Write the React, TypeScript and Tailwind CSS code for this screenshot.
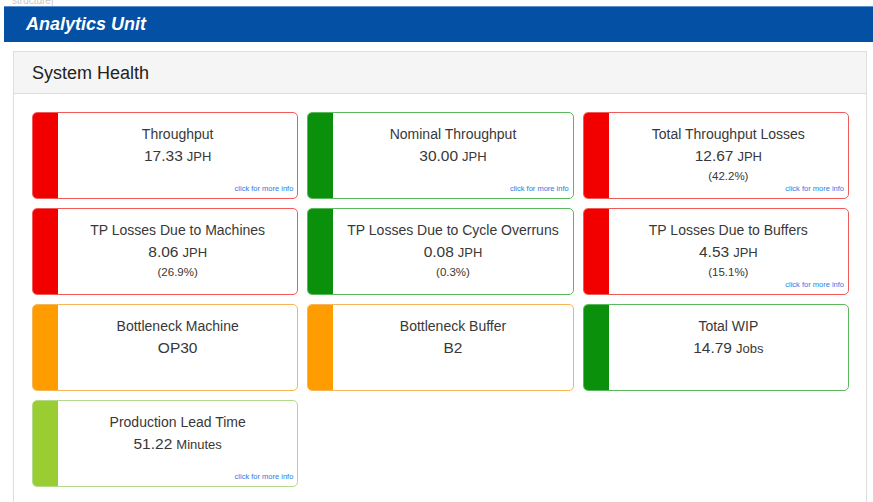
import React from "react";

type Metric = {
  title: string;
  value: string;
  unit?: string;
  pct?: string;
  status: "bad" | "good" | "warn" | "ok";
  more?: boolean;
};

const metrics: Metric[] = [
  { title: "Throughput", value: "17.33", unit: "JPH", status: "bad", more: true },
  { title: "Nominal Throughput", value: "30.00", unit: "JPH", status: "good", more: true },
  { title: "Total Throughput Losses", value: "12.67", unit: "JPH", pct: "(42.2%)", status: "bad", more: true },
  { title: "TP Losses Due to Machines", value: "8.06", unit: "JPH", pct: "(26.9%)", status: "bad" },
  { title: "TP Losses Due to Cycle Overruns", value: "0.08", unit: "JPH", pct: "(0.3%)", status: "good" },
  { title: "TP Losses Due to Buffers", value: "4.53", unit: "JPH", pct: "(15.1%)", status: "bad", more: true },
  { title: "Bottleneck Machine", value: "OP30", status: "warn" },
  { title: "Bottleneck Buffer", value: "B2", status: "warn" },
  { title: "Total WIP", value: "14.79", unit: "Jobs", status: "good" },
  { title: "Production Lead Time", value: "51.22", unit: "Minutes", status: "ok", more: true },
];

const statusStyles: Record<Metric["status"], { border: string; strip: string }> = {
  bad: { border: "border-[#f25a5a]", strip: "bg-[#f20000]" },
  good: { border: "border-[#5cb85c]", strip: "bg-[#0a900a]" },
  warn: { border: "border-[#f7b55a]", strip: "bg-[#ff9c00]" },
  ok: { border: "border-[#b5d98a]", strip: "bg-[#9acd32]" },
};

function MetricCard({ m }: { m: Metric }) {
  const s = statusStyles[m.status];
  return (
    <div className={`flex h-[87px] overflow-hidden rounded-[5px] border ${s.border} bg-white`}>
      <div className={`w-[25px] shrink-0 ${s.strip}`} />
      <div className="relative flex-1 pt-[11px] text-center text-[#383838]">
        <div className="text-[14px] leading-[20px]">{m.title}</div>
        <div className="mt-[2px] leading-[20px]">
          <span className="text-[15.5px]">{m.value}</span>
          {m.unit && <span className="ml-[4px] text-[13px]">{m.unit}</span>}
        </div>
        {m.pct && <div className="mt-[1px] text-[11.5px] leading-[16px]">{m.pct}</div>}
        {m.more && (
          <span className="absolute bottom-[4px] right-[4px] text-[7.5px] leading-[10px] text-[#2b7be4]">
            click for more info
          </span>
        )}
      </div>
    </div>
  );
}

export default function App() {
  return (
    <div className="h-[502px] overflow-hidden bg-white font-['Liberation_Sans',Arial,sans-serif]">
      <div className="h-[6px] overflow-hidden pl-[12px]">
        <div className="-mt-[7px] text-[10px] text-[#c8c8c8]">structure|</div>
      </div>
      <div className="ml-[4px] flex h-[36px] items-center border-t border-[#5b8fd0] bg-[#0350a4] pl-[22px]">
        <span className="text-[18px] font-bold italic text-white">Analytics Unit</span>
      </div>
      <div className="ml-[13px] mt-[9px] w-[854px] border border-[#dedede]">
        <div className="flex h-[42px] items-center border-b border-[#dedede] bg-[#f5f5f5] pl-[18px]">
          <h2 className="pt-[2px] text-[18px] text-[#222]">System Health</h2>
        </div>
        <div className="grid w-[835px] grid-cols-3 gap-x-[9px] gap-y-[9px] pb-[40px] pl-[18px] pt-[18px]">
          {metrics.map((m) => (
            <MetricCard key={m.title} m={m} />
          ))}
        </div>
      </div>
    </div>
  );
}
